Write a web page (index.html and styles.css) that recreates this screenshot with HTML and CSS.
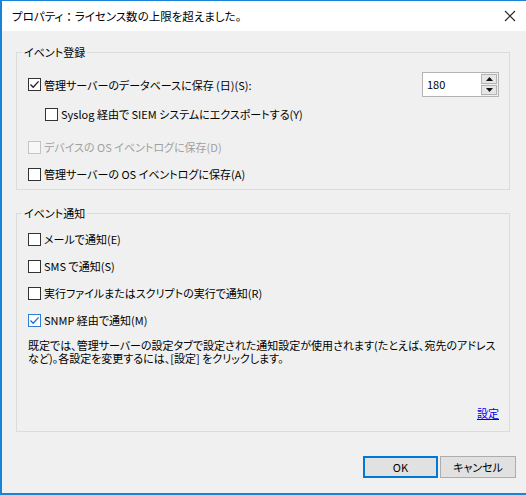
FILE: index.html
```html
<!DOCTYPE html>
<html lang="ja">
<head>
<meta charset="utf-8">
<title>プロパティ：ライセンス数の上限を超えました。</title>
<link rel="stylesheet" href="styles.css">
</head>
<body>
<div class="window">
  <div class="titlebar">
    <span class="title">プロパティ<span class="wide">：</span>ライセンス数の上限を超えました。</span>
    <svg class="close" width="12" height="12" viewBox="0 0 12 12"><path d="M1 1 L11 11 M11 1 L1 11" stroke="#222" stroke-width="1.1" fill="none"/></svg>
  </div>
  <div class="content">
    <fieldset class="group group-reg">
      <legend>イベント登録</legend>
      <div class="row row-spin">
        <label class="check"><span class="cb checked"><svg viewBox="0 0 11 11" width="11" height="11"><path d="M1.5 5.5 L4.2 8.3 L9.6 2.4" stroke="#222" stroke-width="1.3" fill="none"/></svg></span>管理サーバーのデータベースに保存 (日)(S):</label>
        <div class="spin">
          <span class="spin-value">180</span>
          <div class="spin-btns">
            <span class="spin-btn"><svg width="7" height="4" viewBox="0 0 7 4"><path d="M0 4 L3.5 0 L7 4 Z" fill="#111"/></svg></span>
            <span class="spin-btn"><svg width="7" height="4" viewBox="0 0 7 4"><path d="M0 0 L7 0 L3.5 4 Z" fill="#111"/></svg></span>
          </div>
        </div>
      </div>
      <div class="row row-indent">
        <label class="check"><span class="cb"></span>Syslog 経由で SIEM システムにエクスポートする(Y)</label>
      </div>
      <div class="row row-3">
        <label class="check disabled"><span class="cb"></span>デバイスの OS イベントログに保存(D)</label>
      </div>
      <div class="row row-4">
        <label class="check"><span class="cb"></span>管理サーバーの OS イベントログに保存(A)</label>
      </div>
    </fieldset>

    <fieldset class="group group-notify">
      <legend>イベント通知</legend>
      <div class="row row-n1">
        <label class="check"><span class="cb"></span>メールで通知(E)</label>
      </div>
      <div class="row row-n">
        <label class="check"><span class="cb"></span>SMS で通知(S)</label>
      </div>
      <div class="row row-n">
        <label class="check"><span class="cb"></span>実行ファイルまたはスクリプトの実行で通知(R)</label>
      </div>
      <div class="row row-n">
        <label class="check focus"><span class="cb checked"><svg viewBox="0 0 11 11" width="11" height="11"><path d="M1.5 5.5 L4.2 8.3 L9.6 2.4" stroke="#1e6fd0" stroke-width="1.3" fill="none"/></svg></span>SNMP 経由で通知(M)</label>
      </div>
      <p class="note">既定では、管理サーバーの設定タブで設定された通知設定が使用されます(たとえば、宛先のアドレス<br>など)。各設定を変更するには、[設定] をクリックします。</p>
      <div class="link-row"><a href="#" class="link">設定</a></div>
    </fieldset>

    <div class="buttons">
      <button class="btn btn-default">OK</button>
      <button class="btn">キャンセル</button>
    </div>
  </div>
</div>
</body>
</html>
```

FILE: styles.css
```css
* { box-sizing: border-box; }

html, body {
  margin: 0;
  padding: 0;
  background: #ffffff;
}

body {
  font-family: "Noto Sans CJK JP", "Noto Sans", sans-serif;
  font-size: 11px;
  font-feature-settings: "palt";
  color: #000;
}

.window {
  width: 526px;
  height: 495px;
  display: flex;
  flex-direction: column;
  border-left: 2px solid #1883d7;
  border-top: 1px solid #1883d7;
  border-bottom: 2px solid #1883d7;
  background: #f0f0f0;
}

.titlebar {
  height: 30px;
  background: #ffffff;
  display: flex;
  align-items: center;
  justify-content: space-between;
  padding: 0 10px 0 10px;
  line-height: 16px;
}

.title {
  font-size: 11.5px;
}

.title .wide {
  font-feature-settings: normal;
}

.close {
  display: block;
}

.content {
  flex: 1;
  padding: 13px 10px 0 14px;
  display: flex;
  flex-direction: column;
}

.group {
  margin: 0 6px 0 0;
  padding: 0 10px 0 5px;
  border: 1px solid #dcdcdc;
  border-radius: 0;
  min-width: 0;
}

.group legend {
  padding: 0 2px;
  line-height: 16px;
}

.group-reg {
  padding-top: 12px;
  padding-bottom: 5px;
}

.group-notify {
  margin-top: 15px;
  padding-top: 8px;
  padding-bottom: 10px;
}

.row {
  display: flex;
  align-items: center;
  justify-content: space-between;
  height: 20px;
  margin-left: 6px;
}

.row-spin { height: 25px; }
.row-indent { margin-left: 23px; margin-top: 7px; }
.row-3 { margin-top: 13px; }
.row-4 { margin-top: 7px; }
.row-n { margin-top: 7px; }

.check {
  display: flex;
  align-items: center;
  gap: 3px;
  white-space: nowrap;
  line-height: 16px;
}

.cb {
  width: 13px;
  height: 13px;
  border: 1px solid #333333;
  background: #ffffff;
  display: flex;
  align-items: center;
  justify-content: center;
  flex: none;
}

.check.disabled { color: #a0a0a0; }
.check.disabled .cb { border-color: #c4c4c4; background: #f7f7f7; }
.check.focus .cb { border-color: #2b7fd8; }

.spin {
  width: 77px;
  height: 25px;
  border: 1px solid #b4b4b4;
  background: #ffffff;
  display: flex;
}

.spin-value {
  flex: 1;
  padding: 3px 0 0 4px;
  line-height: 16px;
}

.spin-btns {
  width: 17px;
  display: flex;
  flex-direction: column;
  gap: 1px;
  padding: 1px 1px 1px 0;
  background: #f0f0f0;
}

.spin-btn {
  flex: 1;
  border: 1px solid #b4b4b4;
  background: #e6e6e6;
  display: flex;
  align-items: center;
  justify-content: center;
}

.note {
  margin: 9px 0 0 6px;
  line-height: 13px;
  white-space: nowrap;
}

.link-row {
  display: flex;
  justify-content: flex-end;
  margin-top: 40px;
  line-height: 16px;
}

.link {
  color: #0000ee;
  text-decoration: underline;
}

.buttons {
  display: flex;
  justify-content: flex-end;
  gap: 2px;
  margin-top: 24px;
}

.btn {
  font-family: inherit;
  font-size: 11px;
  font-feature-settings: "palt";
  height: 22px;
  width: 76px;
  background: #e1e1e1;
  border: 1px solid #adadad;
  color: #000;
  padding: 0;
  line-height: 16px;
}

.btn-default {
  width: 75px;
  border-color: #0078d7;
  box-shadow: inset 0 0 0 1px #0078d7;
}
```
